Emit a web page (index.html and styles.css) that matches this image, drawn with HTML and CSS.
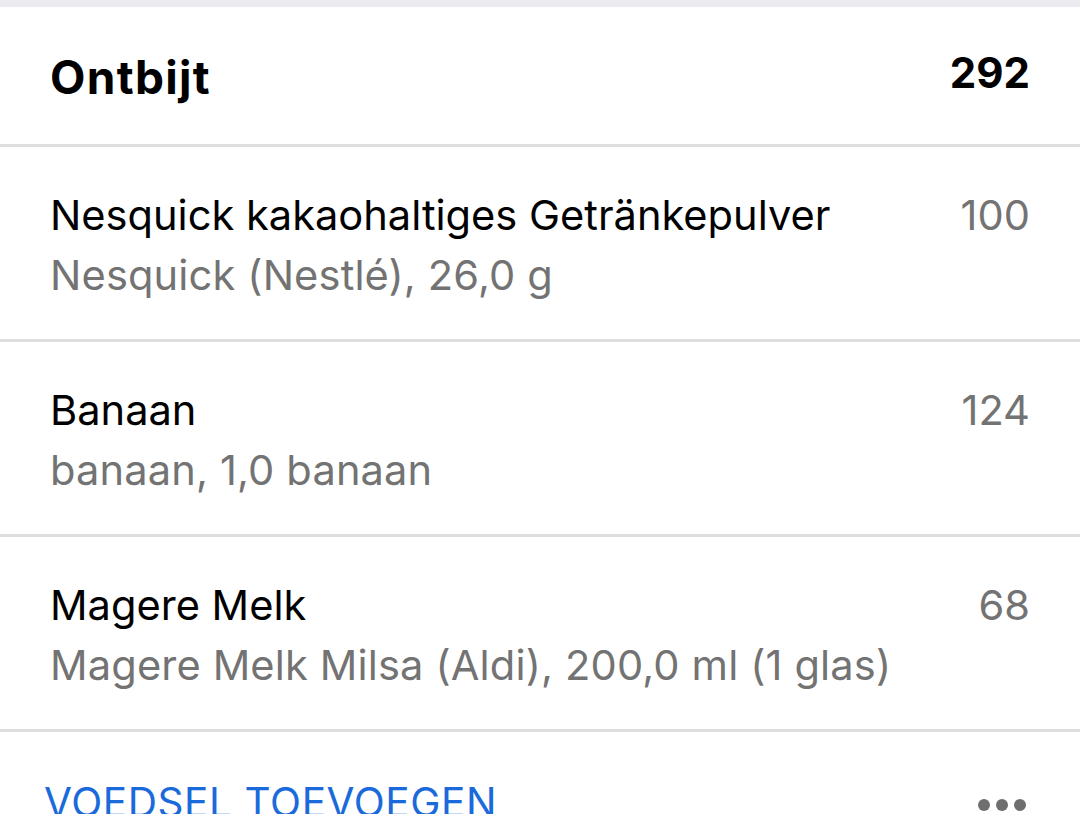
FILE: index.html
```html
<!DOCTYPE html>
<html>
<head>
<meta charset="utf-8">
<link rel="stylesheet" href="styles.css">
</head>
<body>
<div class="topstrip"></div>
<div class="header">
  <div class="title">Ontbijt</div>
  <div class="total">292</div>
</div>
<div class="item">
  <div class="info">
    <div class="name">Nesquick kakaohaltiges Getränkepulver</div>
    <div class="sub">Nesquick (Nestlé), 26,0 g</div>
  </div>
  <div class="kcal">100</div>
</div>
<div class="item">
  <div class="info">
    <div class="name">Banaan</div>
    <div class="sub">banaan, 1,0 banaan</div>
  </div>
  <div class="kcal">124</div>
</div>
<div class="item">
  <div class="info">
    <div class="name">Magere Melk</div>
    <div class="sub">Magere Melk Milsa (Aldi), 200,0 ml (1 glas)</div>
  </div>
  <div class="kcal">68</div>
</div>
<div class="footer">
  <div class="add">VOEDSEL TOEVOEGEN</div>
  <div class="more"><span class="dot"></span><span class="dot"></span><span class="dot"></span></div>
</div>
</body>
</html>
```
FILE: styles.css
```css
html, body {
  margin: 0;
  padding: 0;
  background: #ffffff;
  font-family: Inter, "Liberation Sans", sans-serif;
  overflow: hidden;
}
body {
  width: 1080px;
  height: 814px;
}
.topstrip {
  height: 7px;
  background: #ebebf0;
}
.header {
  height: 140px;
  box-sizing: border-box;
  border-bottom: 3px solid #dedede;
  display: flex;
  justify-content: space-between;
  align-items: flex-start;
  padding: 43px 50px 0 50px;
}
.title {
  font-size: 46px;
  font-weight: 700;
  color: #000;
  line-height: 54px;
  letter-spacing: 1.3px;
}
.total {
  font-size: 42px;
  font-weight: 700;
  color: #000;
  line-height: 52px;
  margin-top: -3px;
}
.item {
  height: 195px;
  box-sizing: border-box;
  border-bottom: 3px solid #dedede;
  display: flex;
  justify-content: space-between;
  align-items: flex-start;
  padding: 43px 50px 0 50px;
}
.info {
  display: flex;
  flex-direction: column;
  gap: 10px;
}
.name {
  font-size: 41.6px;
  color: #000;
  line-height: 50px;
}
.sub {
  font-size: 41.6px;
  color: #737373;
  line-height: 50px;
  letter-spacing: 0.15px;
}
.kcal {
  font-size: 41.6px;
  color: #737373;
  line-height: 50px;
}
.footer {
  display: flex;
  justify-content: space-between;
  align-items: flex-start;
  padding: 46px 54px 0 44px;
}
.add {
  font-size: 40.5px;
  color: #1a6adb;
  line-height: 50px;
  letter-spacing: 0.6px;
}
.more {
  display: flex;
  gap: 6px;
  margin-top: 21px;
}
.dot {
  width: 12px;
  height: 12px;
  border-radius: 50%;
  background: #6e6e6e;
}
```
